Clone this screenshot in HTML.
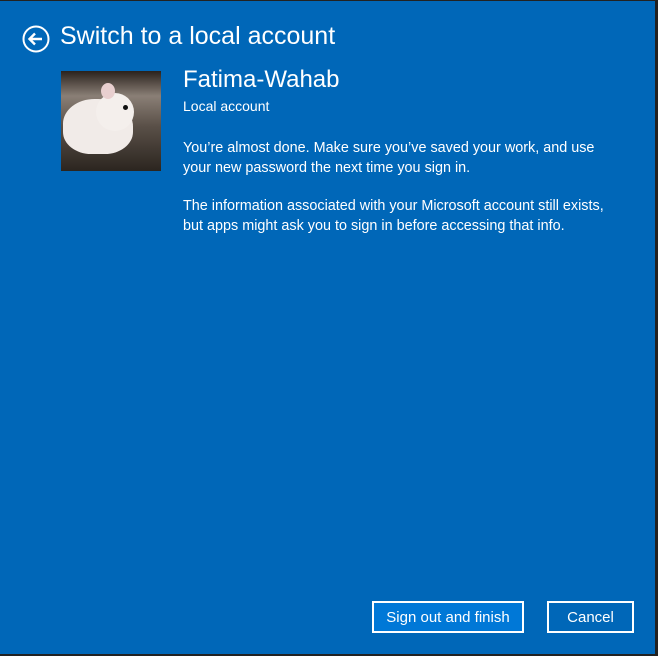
<!DOCTYPE html>
<html><head><style>
body{margin:0;width:658px;height:656px;overflow:hidden;background:#222;font-family:"Liberation Sans",sans-serif;}
#w{position:absolute;left:0;top:1px;width:655px;height:653px;background:#0067b8;color:#fff;}
.t{position:absolute;white-space:nowrap;}
.btn{position:absolute;border:2px solid #fff;box-sizing:border-box;font-size:15px;text-align:center;line-height:29px;}
</style></head><body>
<div id="w">
<svg style="position:absolute;left:22px;top:24px" width="28" height="28" viewBox="0 0 28 28"><circle cx="14" cy="14" r="12.5" fill="none" stroke="#fff" stroke-width="2"/><path d="M20 14H8M13 8.5L7.5 14L13 19.5" fill="none" stroke="#fff" stroke-width="2.4"/></svg>
<div class="t" style="left:60px;top:21px;font-size:25px;">Switch to a local account</div>
<div style="position:absolute;left:61px;top:70px;width:100px;height:100px;overflow:hidden;background:linear-gradient(#2a221d 0%,#8a7f76 25%,#5a5048 55%,#2b251f 100%);">
<div style="position:absolute;left:2px;top:28px;width:70px;height:55px;border-radius:45% 50% 40% 40%;background:#f1ebe8;"></div>
<div style="position:absolute;left:35px;top:22px;width:38px;height:38px;border-radius:50%;background:#f4efec;"></div>
<div style="position:absolute;left:40px;top:12px;width:14px;height:16px;border-radius:50%;background:#e8cfcf;"></div>
<div style="position:absolute;left:62px;top:34px;width:5px;height:5px;border-radius:50%;background:#111;"></div>
</div>
<div class="t" style="left:183px;top:65px;font-size:24px;">Fatima-Wahab</div>
<div class="t" style="left:183px;top:97px;font-size:14px;">Local account</div>
<div class="t" style="left:183px;top:137px;font-size:14.4px;line-height:20px;">You’re almost done. Make sure you’ve saved your work, and use<br>your new password the next time you sign in.</div>
<div class="t" style="left:183px;top:195px;font-size:14.4px;line-height:20px;">The information associated with your Microsoft account still exists,<br>but apps might ask you to sign in before accessing that info.</div>
<div class="btn" style="left:372px;top:600px;width:152px;height:32px;background:#0078d7;">Sign out and finish</div>
<div class="btn" style="left:547px;top:600px;width:87px;height:32px;">Cancel</div>
</div>
</body></html>
